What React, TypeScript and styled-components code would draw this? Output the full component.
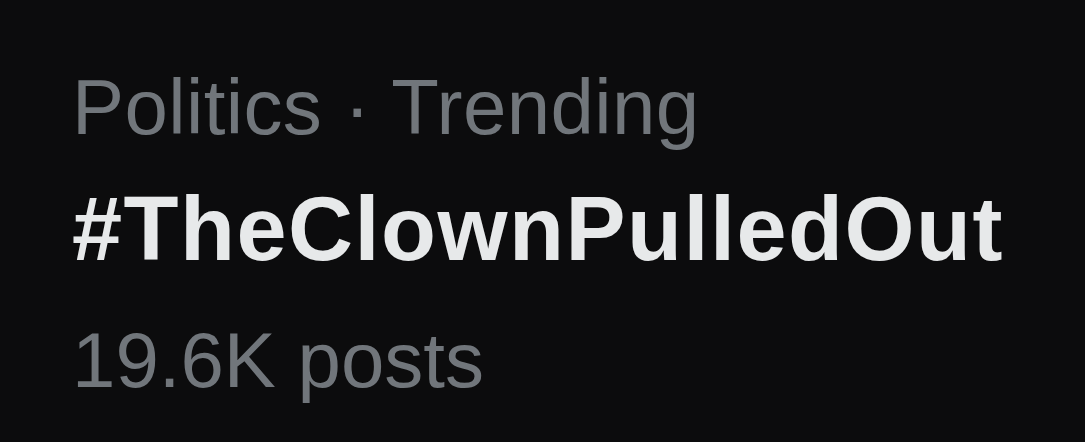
import React from "react";
import styled, { createGlobalStyle } from "styled-components";

const Global = createGlobalStyle`
  html, body {
    margin: 0;
    padding: 0;
    background: #0c0c0d;
  }
  body {
    width: 1085px;
    height: 442px;
    overflow: hidden;
  }
`;

const Card = styled.div`
  box-sizing: border-box;
  width: 1085px;
  height: 442px;
  padding: 45px 0 0 72px;
  background: #0c0c0d;
  font-family: "Liberation Sans", Arial, sans-serif;
  display: flex;
  flex-direction: column;
`;

const Meta = styled.div<{ $lh: number; $ls?: number }>`
  color: #71767b;
  font-size: 78px;
  font-weight: 400;
  line-height: ${(p) => p.$lh}px;
  letter-spacing: ${(p) => p.$ls ?? 0}px;
  white-space: nowrap;
`;

const Tag = styled.div`
  color: #e7e9ea;
  font-size: 90px;
  font-weight: 700;
  line-height: 118px;
  letter-spacing: 1.5px;
  white-space: nowrap;
`;

export default function App() {
  return (
    <>
      <Global />
      <Card>
        <Meta $lh={125} $ls={0.4}>Politics · Trending</Meta>
        <Tag>#TheClownPulledOut</Tag>
        <Meta $lh={144}>19.6K posts</Meta>
      </Card>
    </>
  );
}
